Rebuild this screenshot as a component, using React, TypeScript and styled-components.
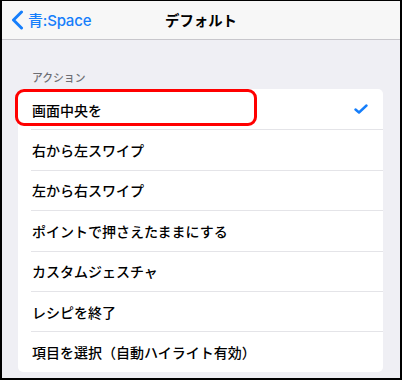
import * as React from "react";
import styled, { createGlobalStyle } from "styled-components";

const GlobalStyle = createGlobalStyle`
  html, body { margin: 0; padding: 0; background: #ffffff; }
  body { font-family: Inter, "Noto Sans CJK JP", sans-serif; }
`;

const actions = [
  "画面中央を",
  "右から左スワイプ",
  "左から右スワイプ",
  "ポイントで押さえたままにする",
  "カスタムジェスチャ",
  "レシピを終了",
  "項目を選択（自動ハイライト有効）",
];

const App = () => {
  return (
    <>
      <GlobalStyle />
      <Frame>
        <NavBar>
          <BackButton>
            <svg width="14" height="20" viewBox="0 0 14 20">
              <path d="M10.5 2 L2.5 10 L10.5 18" fill="none" stroke="#157efb" strokeWidth="3" strokeLinecap="round" strokeLinejoin="round" />
            </svg>
            <span>青:Space</span>
          </BackButton>
          <Title>デフォルト</Title>
          <div />
        </NavBar>

        <Content>
          <SectionHeader>アクション</SectionHeader>
          <Card>
            {actions.map((label, i) => (
              <Row key={label} $first={i === 0}>
                <RowLabel>{label}</RowLabel>
                {i === 0 ? (
                  <CheckIcon width="14" height="11" viewBox="0 0 14 11">
                    <path d="M1.5 5.5 L5 8.5 L12.5 1.5" fill="none" stroke="#157efb" strokeWidth="2.4" strokeLinecap="round" strokeLinejoin="round" />
                  </CheckIcon>
                ) : null}
                {i === 0 ? <Highlight /> : null}
              </Row>
            ))}
          </Card>
        </Content>
      </Frame>
    </>
  );
};

const Frame = styled.div`
  width: 402px;
  height: 380px;
  box-sizing: border-box;
  border-style: solid;
  border-color: #000000;
  border-width: 1px 2px 2px 2px;
  background: #efeff4;
  display: flex;
  flex-direction: column;
  overflow: hidden;
`;

const NavBar = styled.div`
  height: 38px;
  flex-shrink: 0;
  background: #f7f7f7;
  border-bottom: 1px solid #c8c7cc;
  display: grid;
  grid-template-columns: 1fr auto 1fr;
  align-items: center;
`;

const BackButton = styled.div`
  display: flex;
  align-items: center;
  gap: 3px;
  padding-left: 9px;
  color: #157efb;
  font-size: 15px;
  font-weight: 500;
  letter-spacing: -0.2px;
  margin-top: -1px;
`;

const Title = styled.div`
  font-family: "Noto Sans CJK JP", sans-serif;
  font-size: 14.4px;
  font-weight: 700;
  color: #000000;
  margin-top: -1px;
`;

const Content = styled.div`
  padding: 28px 17px 0 16px;
  display: flex;
  flex-direction: column;
`;

const SectionHeader = styled.div`
  font-family: "Noto Sans CJK JP", sans-serif;
  font-size: 10.8px;
  font-weight: 500;
  color: #6d6d72;
  padding-left: 14px;
  height: 21px;
  line-height: 18px;
`;

const Card = styled.div`
  background: #ffffff;
  border-radius: 5px;
  display: flex;
  flex-direction: column;
`;

const Row = styled.div<{ $first: boolean }>`
  position: relative;
  height: 40.4px;
  box-sizing: border-box;
  display: flex;
  align-items: center;
  justify-content: space-between;
  padding: 1px 14px 0 14px;

  &::before {
    content: "";
    display: ${props => (props.$first ? "none" : "block")};
    position: absolute;
    top: 0;
    left: 13px;
    right: 0;
    height: 1px;
    background: #e4e4e8;
  }
`;

const RowLabel = styled.span`
  font-family: "Noto Sans CJK JP", sans-serif;
  font-size: 14px;
  font-weight: 500;
  color: #000000;
`;

const CheckIcon = styled.svg`
  margin-right: 1px;
`;

const Highlight = styled.div`
  position: absolute;
  left: -3px;
  top: 0;
  width: 242px;
  height: 37px;
  box-sizing: border-box;
  border: 3px solid #ff0000;
  border-radius: 9px;
  pointer-events: none;
`;

export default App;
